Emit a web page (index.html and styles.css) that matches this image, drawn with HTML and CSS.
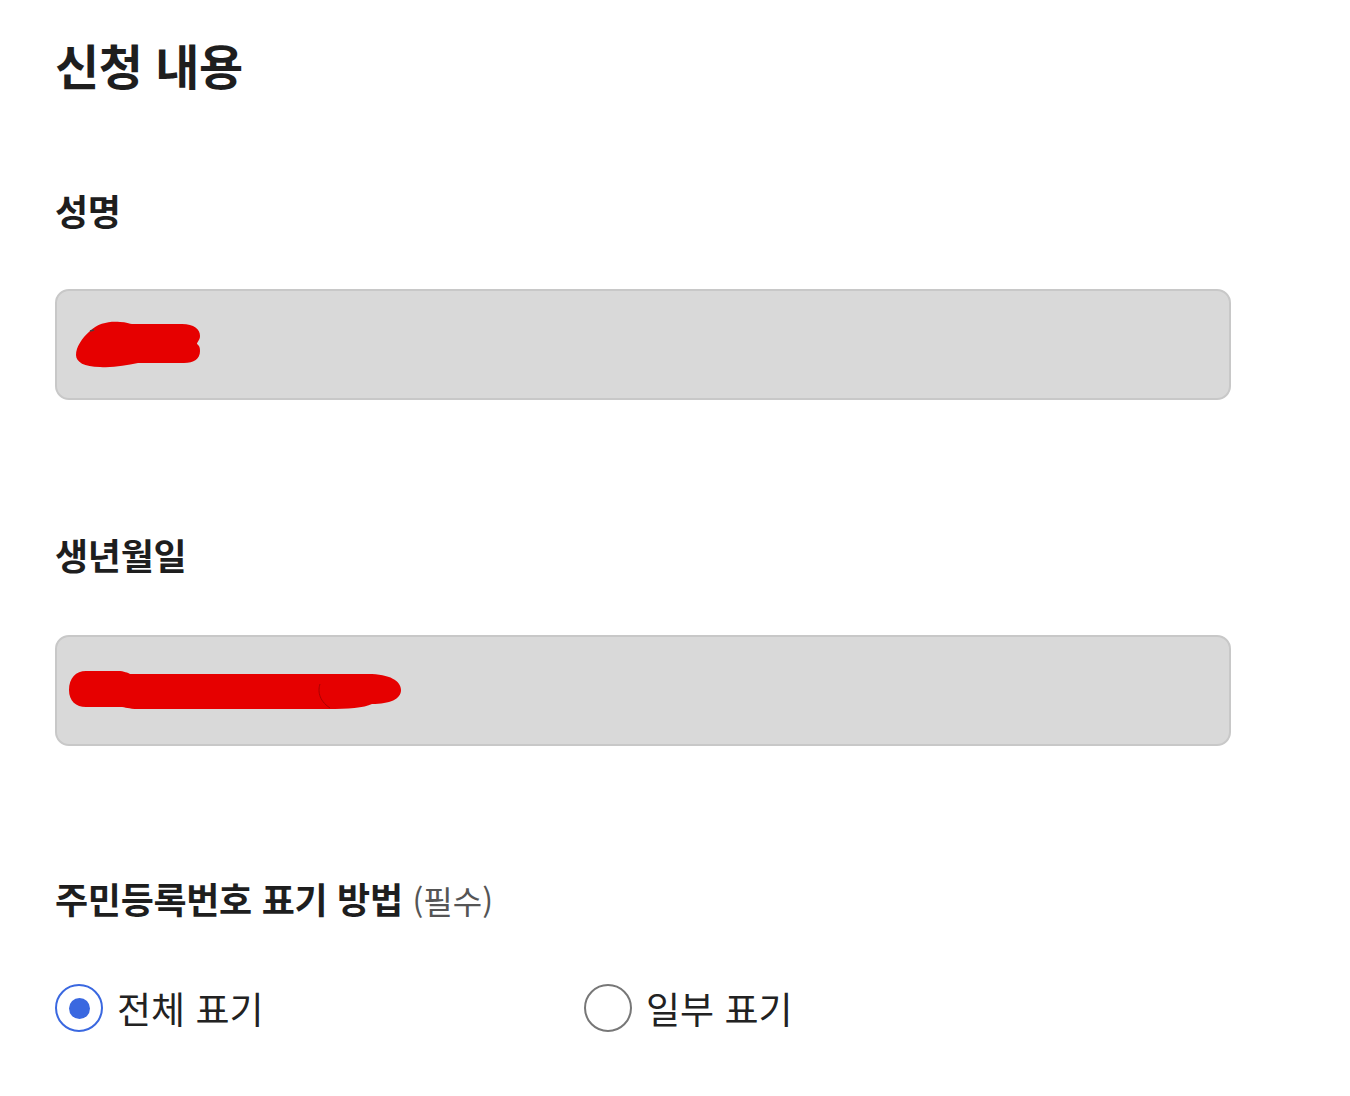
FILE: index.html
```html
<!DOCTYPE html>
<html lang="ko">
<head>
<meta charset="utf-8">
<title>신청 내용</title>
<link rel="stylesheet" href="styles.css">
</head>
<body>
<main class="page">
  <h1 class="title">신청 내용</h1>

  <section class="field">
    <h2 class="label">성명</h2>
    <div class="input">
      <svg class="redact redact-name" width="126" height="48" viewBox="0 0 126 48">
        <path d="M14 10 C22 2 34 0 44 1 C50 1 54 3 56 3 L106 3 C118 3 124 8 124 15 C124 19 121 21 121 23 C124 25 124 28 124 30 C124 38 118 42 108 42 L62 42 C50 44 38 47 24 46 C8 46 0 41 0 34 C0 26 6 17 14 10 Z" fill="#e60000"/>
        <path d="M14 10 L18 9" stroke="#444" stroke-width="1.5"/>
      </svg>
    </div>
  </section>

  <section class="field field-birth">
    <h2 class="label">생년월일</h2>
    <div class="input">
      <svg class="redact redact-birth" width="334" height="40" viewBox="0 0 334 40">
        <path d="M18 1 L50 1 C56 1 60 3 62 4 L300 4 C322 4 333 11 333 20 C333 29 322 34 304 34 C296 38 280 39 260 39 L70 39 C60 39 58 37 52 37 L18 37 C8 37 1 31 1 20 C1 8 8 1 18 1 Z" fill="#e60000"/>
        <path d="M252 14 C250 20 250 30 262 38" stroke="#a00" stroke-width="1" fill="none"/>
      </svg>
    </div>
  </section>

  <section class="field field-id">
    <h2 class="label">주민등록번호 표기 방법 <span class="req">(필수)</span></h2>
    <div class="options">
      <label class="option">
        <span class="radio checked"><span class="dot"></span></span>
        <span class="opt-text">전체 표기</span>
      </label>
      <label class="option">
        <span class="radio"></span>
        <span class="opt-text">일부 표기</span>
      </label>
    </div>
  </section>
</main>
</body>
</html>
```

FILE: styles.css
```css
* { box-sizing: border-box; }

html, body {
  margin: 0;
  padding: 0;
  background: #ffffff;
}

body {
  font-family: "Noto Sans CJK KR", "Noto Sans", sans-serif;
  color: #222222;
}

.page {
  padding: 29px 0 0 55px;
  width: 1230px;
}

.title {
  margin: 0;
  font-size: 48px;
  line-height: 70px;
  font-weight: 700;
  letter-spacing: -0.5px;
  color: #1e1e1e;
}

.field {
  margin-top: 87px;
}

.field-birth {
  margin-top: 130px;
}

.field-birth .input {
  margin-top: 57px;
}

.field-id {
  margin-top: 128px;
}

.label {
  margin: 0;
  font-size: 36px;
  line-height: 48px;
  font-weight: 700;
  letter-spacing: -0.3px;
  color: #1e1e1e;
}

.req {
  font-weight: 400;
  font-size: 32px;
  color: #555555;
  letter-spacing: 0;
}

.input {
  margin-top: 55px;
  height: 111px;
  width: 1176px;
  background: #d9d9d9;
  border: 2px solid #c8c8c8;
  border-radius: 14px;
  display: flex;
  align-items: center;
  padding-left: 19px;
}

.redact-birth {
  margin-left: -8px;
  margin-top: -2px;
}

.options {
  margin-top: 60px;
  display: grid;
  grid-template-columns: 529px auto;
}

.option {
  display: flex;
  align-items: center;
  gap: 14px;
}

.radio {
  width: 48px;
  height: 48px;
  border-radius: 50%;
  border: 2px solid #777777;
  display: flex;
  align-items: center;
  justify-content: center;
  flex: none;
}

.radio.checked {
  border-color: #3a68e0;
}

.dot {
  width: 21px;
  height: 21px;
  border-radius: 50%;
  background: #3a68e0;
}

.opt-text {
  font-size: 37px;
  line-height: 48px;
  font-weight: 400;
  color: #222222;
}
```
